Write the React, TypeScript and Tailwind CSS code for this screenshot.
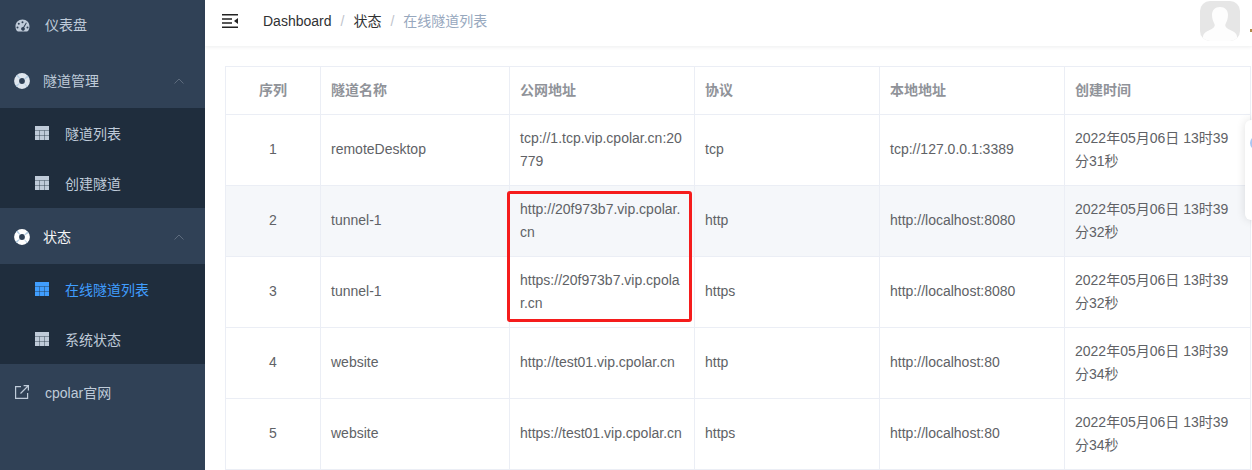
const font = "[font-family:'Liberation_Sans','Noto_Sans_CJK_SC',sans-serif]"

const rows = [
  { id: 1, name: "remoteDesktop", url: "tcp://1.tcp.vip.cpolar.cn:20779", proto: "tcp", local: "tcp://127.0.0.1:3389", time: "2022年05月06日 13时39分31秒" },
  { id: 2, name: "tunnel-1", url: "http://20f973b7.vip.cpolar.cn", proto: "http", local: "http://localhost:8080", time: "2022年05月06日 13时39分32秒" },
  { id: 3, name: "tunnel-1", url: "https://20f973b7.vip.cpolar.cn", proto: "https", local: "http://localhost:8080", time: "2022年05月06日 13时39分32秒" },
  { id: 4, name: "website", url: "http://test01.vip.cpolar.cn", proto: "http", local: "http://localhost:80", time: "2022年05月06日 13时39分34秒" },
  { id: 5, name: "website", url: "https://test01.vip.cpolar.cn", proto: "https", local: "http://localhost:80", time: "2022年05月06日 13时39分34秒" },
]

function GaugeIcon() {
  return (
    <svg width="15" height="13" viewBox="0 0 15 13" className="shrink-0">
      <path
        fill="#bfcbd9"
        fillRule="evenodd"
        d="M7.5 0.5C3.4 0.5 0.5 3.7 0.5 7.4c0 1.8 0.6 3.4 1.6 4.6 0.2 0.3 0.5 0.5 0.9 0.5h9c0.4 0 0.7-0.2 0.9-0.5 1-1.2 1.6-2.8 1.6-4.6 0-3.7-2.9-6.9-7-6.9zM7.5 2.2a1 1 0 1 1 0 2 1 1 0 0 1 0-2zM3.8 3.7a1 1 0 1 1 0 2 1 1 0 0 1 0-2zM11 3.5l0.8 0.5-2.6 4.4a1.9 1.9 0 1 1-0.9-0.4zM2.5 7.4a1 1 0 1 1 0 2 1 1 0 0 1 0-2zM12.5 7.4a1 1 0 1 1 0 2 1 1 0 0 1 0-2z"
      />
    </svg>
  )
}

function RingIcon({ color }: { color: string }) {
  return (
    <svg width="16" height="16" viewBox="0 0 16 16" className="shrink-0">
      <circle cx="8" cy="8" r="5.4" fill="none" stroke={color} strokeWidth="5" />
      <circle
        cx="8"
        cy="8"
        r="5.4"
        fill="none"
        stroke="#b4cde2"
        strokeWidth="5"
        strokeDasharray="1.4 7.08"
        strokeDashoffset="0.7"
        transform="rotate(45 8 8)"
      />
    </svg>
  )
}

function TableIcon({ color }: { color: string }) {
  return (
    <svg width="14" height="14" viewBox="0 0 14 14" className="shrink-0">
      <rect width="14" height="14" fill={color} />
      <path d="M0 4.5h14M0 9.5h14M4.5 4.5V14M9.5 4.5V14" stroke="#1f2d3d" strokeOpacity="0.4" strokeWidth="1" fill="none" />
    </svg>
  )
}

function LinkIcon() {
  return (
    <svg width="14" height="14" viewBox="0 0 14 14" fill="none" stroke="#bfcbd9" strokeWidth="1.2" className="shrink-0">
      <path d="M6 1.6H0.6v11.8h12V8" />
      <path d="M5.5 8.5L13 1M8.6 0.6h4.8v4.8" />
    </svg>
  )
}

function Chevron() {
  return (
    <svg width="10" height="6" viewBox="0 0 10 6" fill="none" stroke="#5d6b7d" strokeWidth="1" className="ml-auto mr-[21px] shrink-0">
      <path d="M0.5 5.5L5 1l4.5 4.5" />
    </svg>
  )
}

function MenuTitle({ label, active }: { label: string; active?: boolean }) {
  return (
    <div className={`flex h-14 items-center pl-[14px] text-sm ${active ? "pt-[2px] text-[#f4f4f5]" : "text-[#bfcbd9]"}`}>
      <RingIcon color={active ? "#ffffff" : "#dfe6ee"} />
      <span className="ml-[13px]">{label}</span>
      <Chevron />
    </div>
  )
}

function SubItem({ label, active }: { label: string; active?: boolean }) {
  return (
    <div className={`flex h-[50px] items-center pl-[35px] text-sm ${active ? "text-[#409eff]" : "text-[#bfcbd9]"}`}>
      <TableIcon color={active ? "#409eff" : "#bfcbd9"} />
      <span className="ml-4 pt-[2px]">{label}</span>
    </div>
  )
}

function Sidebar() {
  return (
    <aside className="h-[470px] w-[205px] shrink-0 overflow-hidden bg-[#304156]">
      <div className="-mt-[3px] flex h-[56px] items-center pl-[15px] text-sm text-[#bfcbd9]">
        <GaugeIcon />
        <span className="ml-[15px]">仪表盘</span>
      </div>
      <MenuTitle label="隧道管理" />
      <div className="-mt-px bg-[#1f2d3d]">
        <SubItem label="隧道列表" />
        <SubItem label="创建隧道" />
      </div>
      <MenuTitle label="状态" active />
      <div className="bg-[#1f2d3d]">
        <SubItem label="在线隧道列表" active />
        <SubItem label="系统状态" />
      </div>
      <div className="flex h-14 items-center pl-[15px] text-sm text-[#bfcbd9]">
        <LinkIcon />
        <span className="ml-4 pt-[2px]">cpolar官网</span>
      </div>
    </aside>
  )
}

function Header() {
  return (
    <header className="flex h-[46px] items-center bg-white pb-1 pl-[17px] shadow-[0_1px_4px_rgba(0,21,41,0.08)]">
      <svg width="16" height="14" viewBox="0 0 16 14" className="shrink-0">
        <path d="M0 0.75h16M0 13.25h16M0 4.9h10M0 9.1h10" stroke="#222" strokeWidth="1.5" />
        <path d="M16 4v6l-4-3z" fill="#222" />
      </svg>
      <nav className="ml-[25px] flex items-center text-sm">
        <span className="text-[#303133]">Dashboard</span>
        <span className="mx-[9px] text-[#c0c4cc]">/</span>
        <span className="text-[#303133]">状态</span>
        <span className="mx-[9px] text-[#c0c4cc]">/</span>
        <span className="text-[#97a8be]">在线隧道列表</span>
      </nav>
      <div className="ml-auto flex self-start pt-px">
        <div className="h-10 w-10 overflow-hidden rounded-[10px] bg-[#e6e6e6]">
          <svg width="40" height="40" viewBox="0 0 40 40">
            <path
              fill="#fdfdfd"
              d="M20 6c-5 0-8 3-8 8 0 3 1 6 2 8 1 2 1 3 0 4-1 2-5 3-8 5-2 1-3 3-3 5v4h34v-4c0-2-1-4-3-5-3-2-7-3-8-5-1-1-1-2 0-4 1-2 2-5 2-8 0-5-3-8-8-8z"
            />
          </svg>
        </div>
        <span className="ml-[10px] mt-[28px] h-[3px] w-[2px] bg-[#b08a4a]" />
      </div>
    </header>
  )
}

function TunnelTable() {
  const th = "border border-[#ebeef5] px-[10px] py-3 text-left text-sm font-bold leading-[23px] text-[#909399]"
  const td = "border border-[#ebeef5] px-[10px] pt-3 text-sm leading-[23px] break-all text-[#606266]"
  // one-line cells sit half a pixel higher than the wrapped ones
  const one = `${td} pb-[13px]`
  const two = `${td} pb-3`
  return (
    <table className="w-[1025px] table-fixed border-collapse bg-white">
      <colgroup>
        <col className="w-[95px]" />
        <col className="w-[189px]" />
        <col className="w-[185px]" />
        <col className="w-[185px]" />
        <col className="w-[185px]" />
        <col className="w-[186px]" />
      </colgroup>
      <thead>
        <tr className="h-[48px]">
          <th className={`${th} !text-center`}>序列</th>
          <th className={th}>隧道名称</th>
          <th className={th}>公网地址</th>
          <th className={th}>协议</th>
          <th className={th}>本地地址</th>
          <th className={th}>创建时间</th>
        </tr>
      </thead>
      <tbody>
        {rows.map((row) => (
          <tr key={row.id} className={`h-[71px] ${row.id === 2 ? "bg-[#f5f7fa]" : "bg-white"}`}>
            <td className={`${one} text-center`}>{row.id}</td>
            <td className={one}>{row.name}</td>
            <td className={row.id > 3 ? one : two}>{row.url}</td>
            <td className={one}>{row.proto}</td>
            <td className={one}>{row.local}</td>
            <td className={two}>{row.time}</td>
          </tr>
        ))}
      </tbody>
    </table>
  )
}

export default function App() {
  return (
    <div className={`relative flex h-[470px] w-[1252px] overflow-hidden bg-white ${font}`}>
      <Sidebar />
      <main className="min-w-0 flex-1">
        <Header />
        <div className="pl-5 pt-5">
          <TunnelTable />
        </div>
      </main>
      {/* red annotation drawn over the screenshot */}
      <div className="absolute left-[507px] top-[191px] h-[131px] w-[185px] rounded-[3px] border-[3px] border-[#f51c1c]" />
      {/* floating panel peeking in from the right edge */}
      <div className="absolute left-[1245px] top-[120px] h-[100px] w-[40px] rounded-[6px] bg-white shadow-[0_0_10px_rgba(0,0,0,0.12)]">
        <div className="ml-[5px] mt-[16px] h-[14px] w-[14px] rounded-full bg-[#a9c6f2]" />
      </div>
    </div>
  )
}
